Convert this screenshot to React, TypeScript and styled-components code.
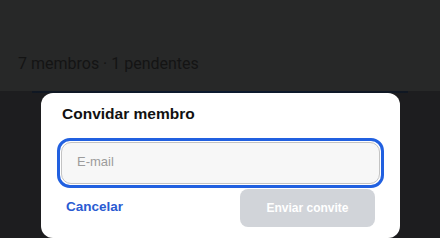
import React from 'react';
import styled, {createGlobalStyle} from "styled-components";

const GlobalStyle = createGlobalStyle`
  html, body {
    margin: 0;
    padding: 0;
    background: #1d1d1f;
    overflow: hidden;
  }
  * {
    box-sizing: border-box;
  }
`;

const Page = styled.div`
  width: 440px;
  height: 238px;
  display: flex;
  flex-direction: column;
  background: #1d1d1f;
`;

const Header = styled.div`
  height: 91px;
  background: #272828;
  display: flex;
  align-items: flex-end;
  padding: 0 18px 17px;
`;

const Summary = styled.div`
  font-family: Roboto, "Noto Sans", sans-serif;
  font-size: 16px;
  line-height: 20px;
  color: #141414;
`;

const SheetEdge = styled.div`
  height: 2px;
  margin: 0 32px;
  background: linear-gradient(90deg, #101722, #0b1a30 50%, #101722);
`;

const Dialog = styled.div`
  margin: 0 40px 0 41px;
  flex: 1;
  background: #ffffff;
  border-radius: 12px;
  padding: 11px 20px 0;
  display: flex;
  flex-direction: column;
`;

const Title = styled.div`
  font-family: "Liberation Sans", Arial, sans-serif;
  font-weight: 700;
  font-size: 15.5px;
  line-height: 19px;
  color: #111111;
  padding-left: 1px;
`;

const Ring = styled.div`
  margin: 15px -4px 0;
  border: 3px solid #2160e0;
  border-radius: 13px;
  padding: 1px;
`;

const Input = styled.input`
  display: block;
  width: 100%;
  height: 42px;
  border: 1.5px solid #c3c3c3;
  border-radius: 10px;
  background: #f7f7f7;
  padding: 0 0 3px 15px;
  font-family: "Liberation Sans", Arial, sans-serif;
  font-size: 13px;
  color: #222;
  outline: none;
  &::placeholder {
    color: #9c9c9c;
  }
`;

const Actions = styled.div`
  display: flex;
  justify-content: space-between;
  align-items: center;
  padding: 0 5px;
  margin-top: 1px;
`;

const LinkButton = styled.button`
  border: none;
  background: none;
  padding: 0 0 4px;
  font-family: "Liberation Sans", Arial, sans-serif;
  font-weight: 700;
  font-size: 13.5px;
  color: #2a5bd2;
  cursor: pointer;
`;

const SubmitButton = styled.button<{disabled?: boolean}>`
  width: 135px;
  height: 38px;
  border: none;
  border-radius: 8px;
  background: ${p => p.disabled ? "#d1d4d9" : "#2160e0"};
  color: #ffffff;
  font-family: "Liberation Sans", Arial, sans-serif;
  font-weight: 700;
  font-size: 12px;
  padding: 0 0 1px;
`;

const App = () => {
    return (
        <Page>
            <GlobalStyle/>
            <Header>
                <Summary>7 membros · 1 pendentes</Summary>
            </Header>
            <SheetEdge/>
            <Dialog>
                <Title>Convidar membro</Title>
                <Ring>
                    <Input placeholder="E-mail"/>
                </Ring>
                <Actions>
                    <LinkButton>Cancelar</LinkButton>
                    <SubmitButton disabled>Enviar convite</SubmitButton>
                </Actions>
            </Dialog>
        </Page>
    );
};

export default App;
